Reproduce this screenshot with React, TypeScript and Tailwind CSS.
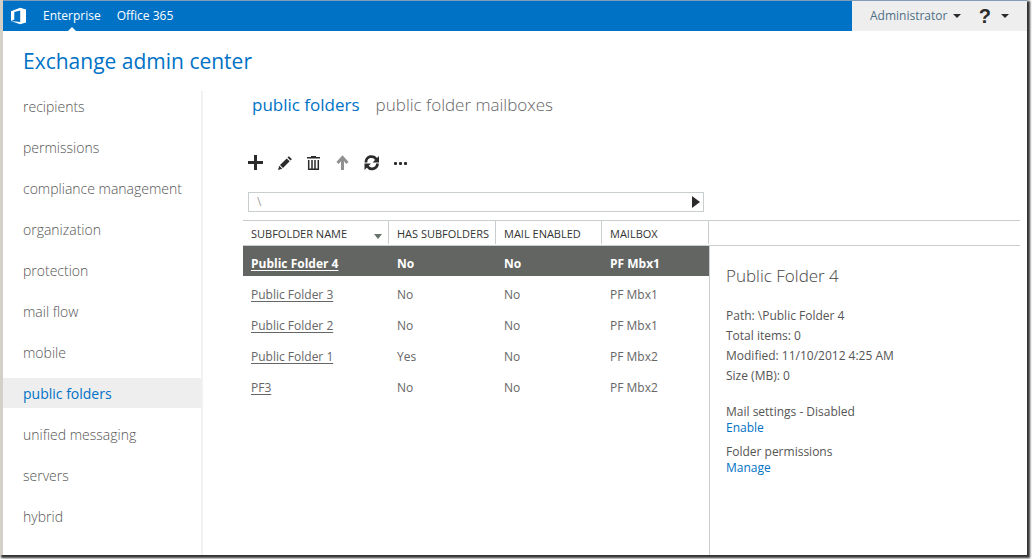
import type { ReactNode } from "react";

const nav = [
  "recipients",
  "permissions",
  "compliance management",
  "organization",
  "protection",
  "mail flow",
  "mobile",
  "public folders",
  "unified messaging",
  "servers",
  "hybrid",
];

const rows = [
  ["Public Folder 4", "No", "No", "PF Mbx1"],
  ["Public Folder 3", "No", "No", "PF Mbx1"],
  ["Public Folder 2", "No", "No", "PF Mbx1"],
  ["Public Folder 1", "Yes", "No", "PF Mbx2"],
  ["PF3", "No", "No", "PF Mbx2"],
];

function Caret() {
  return (
    <svg width="8" height="4" viewBox="0 0 8 4" fill="#2b2b2b" aria-hidden="true">
      <path d="M0 0h8L4 4z" />
    </svg>
  );
}

function ToolButton({ label, disabled, children }: { label: string; disabled?: boolean; children: ReactNode }) {
  return (
    <button type="button" aria-label={label} disabled={disabled} className="h-4 w-4">
      <svg width="16" height="16" viewBox="0 0 16 16" aria-hidden="true">
        {children}
      </svg>
    </button>
  );
}

function Header() {
  return (
    <header className="flex h-[31px] border-t border-[#7f9db9] bg-[#0072c6] text-[12px] text-white">
      <div className="flex flex-1 items-center pl-2">
        <svg width="16" height="18" viewBox="0 0 16 18" role="img" aria-label="Office">
          <path fill="#fff" fillRule="evenodd" d="M0 4.2 9.2.8 15 2.4v13.2l-5.8 1.6L0 13.9l9.2 1.2V3.6L3.3 5v7.6L0 13.9z" />
        </svg>
        <nav className="flex h-full">
          <a href="#enterprise" className="relative flex items-center px-4">
            Enterprise
            <svg className="absolute bottom-0 left-1/2 -ml-1" width="8" height="4" viewBox="0 0 8 4" fill="#fff" aria-hidden="true">
              <path d="M0 4 4 0l4 4z" />
            </svg>
          </a>
          <a href="#office365" className="flex items-center">Office 365</a>
        </nav>
      </div>
      <div className="flex w-[175px] items-center justify-between bg-[#eeeeee] pr-[18px] pl-[18px]">
        <button type="button" className="flex items-center gap-1.5 text-[#4f6f86]">
          Administrator
          <Caret />
        </button>
        <button type="button" aria-label="Help" className="flex items-center gap-2.5">
          <span className="font-['Liberation_Sans',sans-serif] text-[20px] leading-6 font-bold text-[#2b2b2b]">?</span>
          <Caret />
        </button>
      </div>
    </header>
  );
}

function Sidebar() {
  return (
    <nav className="w-[200px] shrink-0 border-r-2 border-[#f3f0f1] pb-6">
      <ul className="flex flex-col gap-[11px]">
        {nav.map((item) => (
          <li key={item}>
            <a
              href="#nav"
              aria-current={item === "public folders" ? "page" : undefined}
              className={
                item === "public folders"
                  ? "flex h-[30px] items-center bg-[#eeeeee] pl-5 text-[14px] text-[#0072c6]"
                  : "flex h-[30px] items-center pl-5 text-[14px] font-light text-[#555555]"
              }
            >
              {item}
            </a>
          </li>
        ))}
      </ul>
    </nav>
  );
}

function Toolbar() {
  return (
    <div className="mt-9 flex items-center gap-[13px] pl-[5px]">
      <ToolButton label="New">
        <path d="M7.500 0v15M0 7.500h15" stroke="#2b2b2b" strokeWidth="3" />
      </ToolButton>
      <ToolButton label="Edit">
        <path fill="#2b2b2b" d="m1 15 1.300-4.200 3 2.900zM3 10l6.700-6.600 3 2.900L6 13zM10.500 2.600l1.400-1.300 3 2.900-1.400 1.300z" />
      </ToolButton>
      <ToolButton label="Delete">
        <path fill="#2b2b2b" d="M5 1h5v1h4v1.500H1V2h4z" />
        <path d="M2.700 5v9.300h9.600V5M6 5v9M9 5v9" fill="none" stroke="#2b2b2b" strokeWidth="1.500" />
      </ToolButton>
      <ToolButton label="Move up" disabled>
        <path d="M7.500 15V2.500M2.500 8l5-5.500 5 5.500" fill="none" stroke="#919191" strokeWidth="3" />
      </ToolButton>
      <ToolButton label="Refresh">
        <path d="M2 7.500A5.500 5.500 0 0 1 12.500 4.800M13.500 8.500A5.500 5.500 0 0 1 3.500 11.500" fill="none" stroke="#2b2b2b" strokeWidth="2.800" />
        <path fill="#2b2b2b" d="M15 1v6.500H8.500zM.5 15V8.500H7z" />
      </ToolButton>
      <ToolButton label="More">
        <rect x="1" y="7" width="3" height="3" rx="1" fill="#2b2b2b" />
        <rect x="6" y="7" width="3" height="3" rx="1" fill="#2b2b2b" />
        <rect x="11" y="7" width="3" height="3" rx="1" fill="#2b2b2b" />
      </ToolButton>
    </div>
  );
}

function FolderTable() {
  return (
    <table className="w-[466px] shrink-0 table-fixed border-separate border-spacing-0 self-start text-left text-[12px] text-[#666666]">
      <colgroup>
        <col className="w-[146px]" />
        <col className="w-[107px]" />
        <col className="w-[106px]" />
        <col />
      </colgroup>
      <thead>
        <tr className="text-[11px] text-[#333333]">
          {["SUBFOLDER NAME", "HAS SUBFOLDERS", "MAIL ENABLED", "MAILBOX"].map((title, i) => (
            <th key={title} scope="col" className="h-[26px] border-y border-[#c8cdd0] p-0 align-top font-normal whitespace-nowrap">
              <span className="flex h-[23px] items-center justify-between border-r border-[#c8cdd0] pt-1 pr-1.5 pl-2">
                {title}
                {i === 0 && (
                  <svg className="mt-1" width="8" height="5" viewBox="0 0 8 5" fill="#66736b" aria-hidden="true">
                    <path d="M0 0h8L4 5z" />
                  </svg>
                )}
              </span>
            </th>
          ))}
        </tr>
      </thead>
      <tbody>
        {rows.map((row, i) => (
          <tr key={row[0]} className={i === 0 ? "h-[30px] bg-[#636562] font-bold text-white" : "h-[31px]"}>
            {row.map((cell, j) => (
              <td key={j} className="pt-1.5 pr-0 pb-0 pl-2">
                {j === 0 ? <a href="#folder" className="underline underline-offset-2">{cell}</a> : cell}
              </td>
            ))}
          </tr>
        ))}
      </tbody>
    </table>
  );
}

function Details() {
  return (
    <aside className="flex flex-1 flex-col">
      <div className="h-[26px] shrink-0 border-y border-[#c8cdd0]" />
      <div className="flex-1 border-l border-[#c8cdd0] pl-4 text-[12px] leading-5 text-[#555555]">
        <h2 className="mt-4 text-[17px] leading-7 font-light text-[#444444]">Public Folder 4</h2>
        <div className="mt-4">
          <p>Path: \Public Folder 4</p>
          <p>Total items: 0</p>
          <p>Modified: 11/10/2012 4:25 AM</p>
          <p>Size (MB): 0</p>
        </div>
        <div className="mt-[18px] flex flex-col gap-2 leading-4">
          <div>
            <p>Mail settings - Disabled</p>
            <a href="#enable" className="text-[#0072c6]">Enable</a>
          </div>
          <div>
            <p>Folder permissions</p>
            <a href="#manage" className="text-[#0072c6]">Manage</a>
          </div>
        </div>
      </div>
    </aside>
  );
}

export default function App() {
  return (
    <div className="min-h-screen bg-white pr-[5px] pb-1 font-['Open_Sans',sans-serif]">
      <div className="flex min-h-[calc(100vh-4px)] flex-col border-l-[3px] border-[#d4d0c8] bg-white shadow-[2px_2px_2px_1px_#333333]">
        <Header />
        <h1 className="mt-3 mb-3 pl-5 text-[21px] leading-9 text-[#0072c6]">Exchange admin center</h1>
        <div className="flex flex-1">
          <Sidebar />
          <main className="flex min-w-0 flex-1 flex-col pr-[7px] pl-10">
            <div className="flex gap-4 pl-[9px] text-[17px] leading-7">
              <a href="#folders" className="text-[#0072c6]">public folders</a>
              <a href="#mailboxes" className="font-light text-[#666666]">public folder mailboxes</a>
            </div>
            <Toolbar />
            <div className="mt-[21px] ml-[5px] flex h-5 w-[456px] items-center border border-[#c8cdd0] pr-[3px]">
              <input aria-label="Folder path" defaultValue="\" className="min-w-0 flex-1 bg-transparent pl-2 text-[12px] text-[#a0a0a0] outline-none" />
              <button type="button" aria-label="Go">
                <svg width="8" height="12" viewBox="0 0 8 12" fill="#2b2b2b" aria-hidden="true">
                  <path d="M0 0v12l8-6z" />
                </svg>
              </button>
            </div>
            <div className="mt-2 flex flex-1">
              <FolderTable />
              <Details />
            </div>
          </main>
        </div>
      </div>
    </div>
  );
}
